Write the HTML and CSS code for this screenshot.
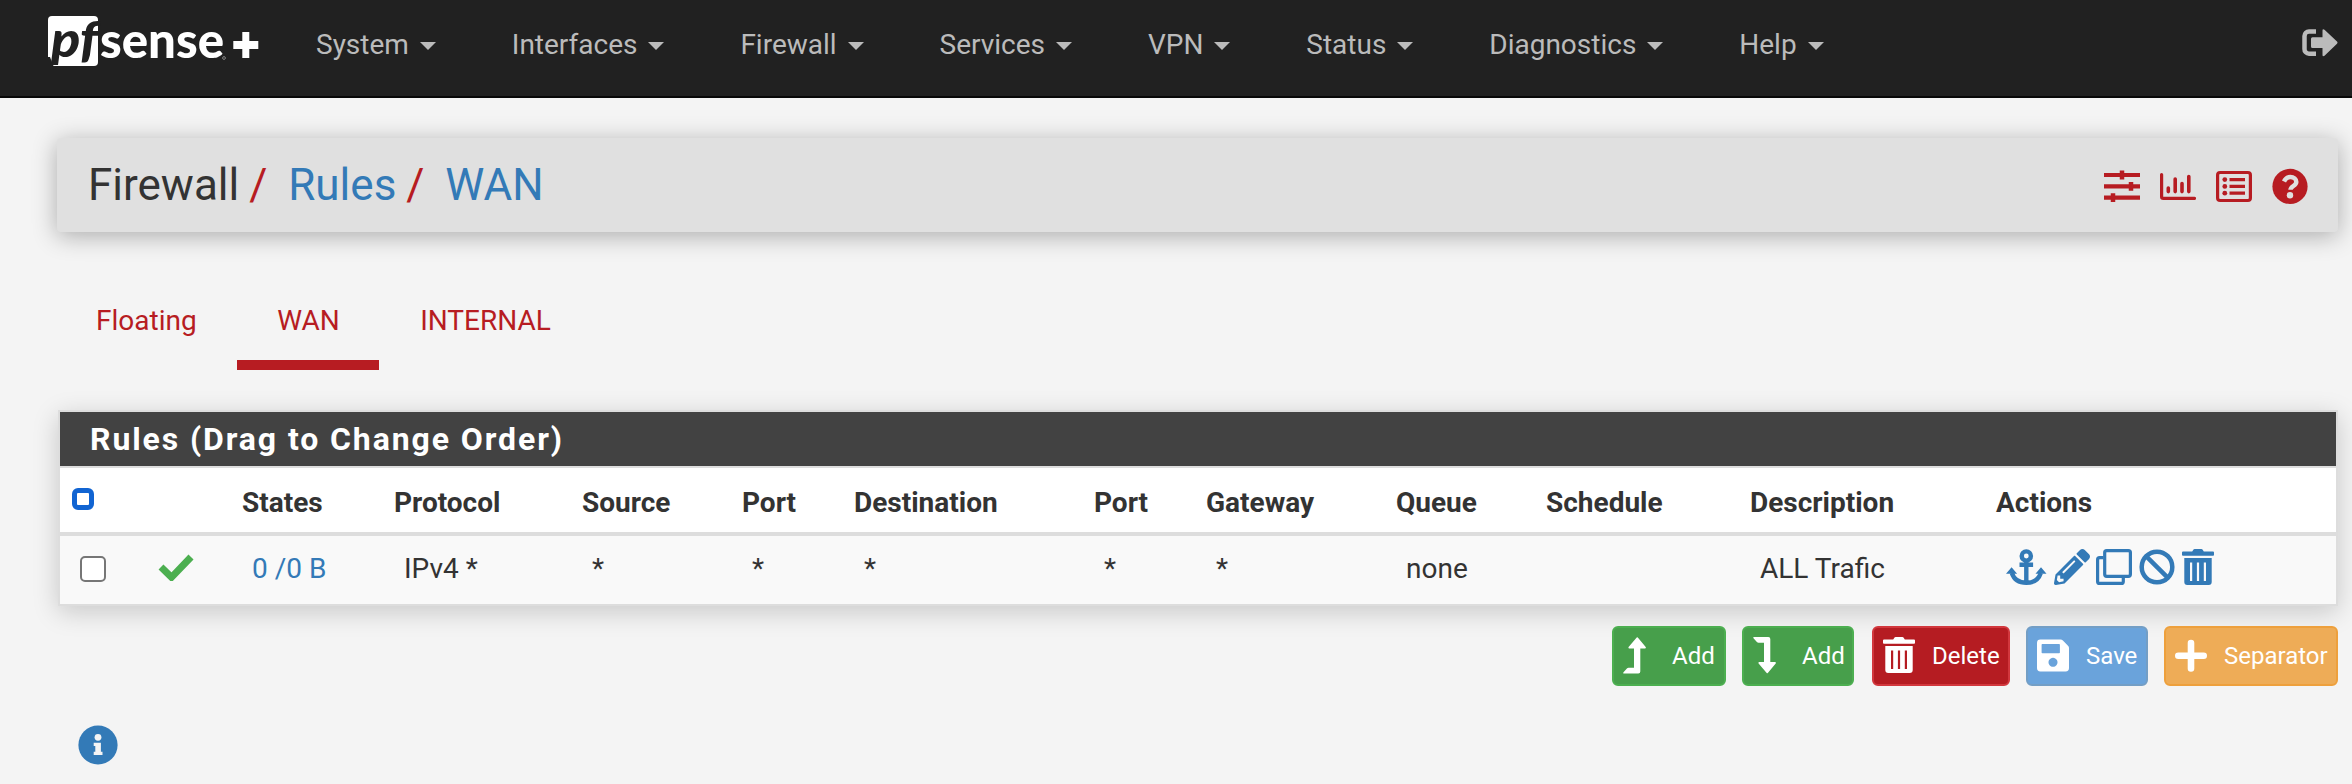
FILE: index.html
```html
<!DOCTYPE html>
<html lang="en">
<head>
<meta charset="utf-8">
<title>Firewall: Rules: WAN</title>
<link rel="stylesheet" href="styles.css">
</head>
<body>
<nav class="navbar">
  <svg class="logo" width="214" height="60" viewBox="0 0 214 60">
    <rect width="50" height="50" rx="4" fill="#fff"/>
    <path d="M0 41L2 41L5.500 50H0z" fill="#212121"/>
    <text class="logo-pf" x="3" y="41" textLength="47" lengthAdjust="spacingAndGlyphs">pf</text>
    <text class="logo-sense" x="52" y="41.5" textLength="124" lengthAdjust="spacingAndGlyphs">sense</text>
    <circle cx="176" cy="42" r="1.4" fill="none" stroke="#999" stroke-width=".8"/>
    <path d="M194.300 16h7v9h9v8h-9v9h-7v-9h-9v-8h9z" fill="#fff"/>
  </svg>
  <ul class="menu">
    <li>System<i class="caret"></i></li>
    <li>Interfaces<i class="caret"></i></li>
    <li>Firewall<i class="caret"></i></li>
    <li>Services<i class="caret"></i></li>
    <li>VPN<i class="caret"></i></li>
    <li>Status<i class="caret"></i></li>
    <li>Diagnostics<i class="caret"></i></li>
    <li>Help<i class="caret"></i></li>
  </ul>
  <svg class="logout" width="36" height="28" viewBox="0 0 36 28">
    <path d="M14 2.500H7A4.500 4.500 0 0 0 2.500 7v13A4.500 4.500 0 0 0 7 24.700h7" fill="none" stroke="#bbb" stroke-width="4.500"/>
    <path d="M10.500 8.200H20.500V1.500q0-2.200 2-.8L35 12.500q1 1.100 0 2.200L22.500 26.700q-2 1.200-2-.8V19H10.500q-1.500 0-1.500-1.500v-7.800q0-1.500 1.500-1.500z" fill="#bbb"/>
  </svg>
</nav>

<main class="container">
  <header class="page-header">
    <ol class="breadcrumb">
      <li>Firewall</li><li class="sep">/</li><li><a>Rules</a></li><li class="sep">/</li><li><a>WAN</a></li>
    </ol>
    <div class="header-icons">
      <svg width="36" height="36" viewBox="0 0 36 36" fill="none" stroke="#b71c22">
        <path d="M0 7h36M0 18.300h36M0 29.700h36" stroke-width="4.200"/>
        <path d="M18 2.600v8.800M27 13.900v8.800M9 25.300v8.800" stroke-width="4.500"/>
      </svg>
      <svg width="36" height="36" viewBox="0 0 36 36" fill="none" stroke="#b71c22" stroke-linecap="round">
        <path d="M1.600 6.500v22.200q0 1.700 1.700 1.700h31.200" stroke-width="3.200"/>
        <path d="M8.300 20v3.600M15.200 11v12.600M22 15.500v8.100M28.800 8.600v15" stroke-width="3.600"/>
      </svg>
      <svg width="36" height="36" viewBox="0 0 36 36" fill="none" stroke="#b71c22">
        <rect x="1.600" y="4.500" width="32.800" height="28" rx="2.500" stroke-width="3.200"/>
        <path d="M13.500 11.600h15.500M13.500 18.400h15.500M13.500 25.200h15.500" stroke-width="3.200"/>
        <g fill="#b71c22" stroke="none"><circle cx="8.800" cy="11.600" r="2.400"/><circle cx="8.800" cy="18.400" r="2.400"/><circle cx="8.800" cy="25.200" r="2.400"/></g>
      </svg>
      <svg width="36" height="36" viewBox="0 0 36 36">
        <circle cx="18" cy="18.400" r="17.600" fill="#b71c22"/>
        <path d="M12 13.600C13.500 10.500 15.400 9 18.300 9c3.500 0 6 2.200 6 5 0 3.900-5.800 4.100-5.800 7.800" fill="none" stroke="#e0e0e0" stroke-width="4.500"/>
        <circle cx="18" cy="27.300" r="3.200" fill="#e0e0e0"/>
      </svg>
    </div>
  </header>

  <ul class="tabs">
    <li>Floating</li><li class="active">WAN</li><li>INTERNAL</li>
  </ul>

  <section class="panel">
    <h2 class="panel-title">Rules (Drag to Change Order)</h2>
    <div class="row head">
      <span><i class="check-all"></i></span><span></span><span>States</span><span>Protocol</span><span>Source</span><span>Port</span><span>Destination</span><span>Port</span><span>Gateway</span><span>Queue</span><span>Schedule</span><span>Description</span><span>Actions</span>
    </div>
    <div class="row rule">
      <span><i class="check"></i></span>
      <span><svg class="pass" width="36" height="28" viewBox="0 0 36 28"><path d="M3 14l10.500 10.300L33 4" fill="none" stroke="#4caf50" stroke-width="7"/></svg></span>
      <span><a>0 /0 B</a></span><span>IPv4 *</span><span>*</span><span>*</span><span>*</span><span>*</span><span>*</span><span>none</span><span></span><span>ALL Trafic</span>
      <span class="actions">
        <svg width="41" height="37" viewBox="0 0 41 37" fill="none" stroke="#337ab7">
          <circle cx="20.300" cy="7" r="4.600" stroke-width="4.400"/>
          <path d="M20.300 12v23M13.500 15.700h13.600M5.800 24C8 30.500 13 33.800 20.300 33.800S32.600 30.500 34.800 24" stroke-width="4.400"/>
          <path d="M0 24.800l5.600-6.600 5.500 6.600zM29.500 24.800l5.500-6.600 5.500 6.600z" fill="#337ab7" stroke="none"/>
        </svg>
        <svg width="36" height="36" viewBox="0 0 512 512" fill="#337ab7"><path d="M497.900 142.100l-46.100 46.100c-4.700 4.700-12.300 4.700-17 0l-111-111c-4.700-4.700-4.700-12.300 0-17l46.100-46.100c18.700-18.700 49.100-18.700 67.900 0l60.100 60.100c18.800 18.700 18.800 49.100 0 67.900zM284.200 99.800L21.600 362.400.4 483.900c-2.900 16.400 11.400 30.600 27.800 27.800l121.500-21.300 262.600-262.600c4.700-4.700 4.700-12.300 0-17l-111-111c-4.800-4.700-12.400-4.700-17.100 0zM124.100 339.900c-5.500-5.500-5.500-14.300 0-19.800l154-154c5.500-5.500 14.300-5.500 19.800 0s5.500 14.300 0 19.800l-154 154c-5.500 5.500-14.300 5.500-19.800 0zM88 424h48v36.300l-64.500 11.300-31.100-31.100L51.700 376H88v48z"/></svg>
        <svg width="36" height="36" viewBox="0 0 36 36" fill="none" stroke="#337ab7" stroke-width="3.200">
          <rect x="8.700" y="1.600" width="25.700" height="25.700" rx="2"/>
          <path d="M7.500 8.700H3.600q-2 0-2 2v21.700q0 2 2 2h21.700q2 0 2-2v-5"/>
        </svg>
        <svg width="36" height="36" viewBox="0 0 36 36" fill="none" stroke="#337ab7" stroke-width="4.500">
          <circle cx="18" cy="18" r="15.300"/><path d="M7.300 7.300l21.400 21.400"/>
        </svg>
        <svg width="32" height="36" viewBox="0 0 32 36" fill="#337ab7">
          <path d="M1 2.600h9.200L11.500.4q.3-.4 1-.4h7q.7 0 1 .4l1.300 2.200H31q1 0 1 1v2.300q0 .8-1 .8H1q-1 0-1-.8V3.600q0-1 1-1z"/>
          <path fill-rule="evenodd" d="M2.300 9h27.400v24q0 3-3 3H5.300q-3 0-3-3zM8 13.500v18.500h2.200V13.500zM14.900 13.500v18.500h2.200V13.500zM21.800 13.500v18.500H24V13.500z"/>
        </svg>
      </span>
    </div>
  </section>

  <div class="buttons">
    <button class="btn add up"><svg width="36" height="38" viewBox="0 0 36 38" fill="#fff"><path d="M13.700.5Q14.200 0 14.800.5L22.700 10q.6 1.600-.7 1.600h-4.700V34.500q0 2-2 2H1q-1.300-.1-.5-1.300l3.400-3.700q.7-.7 1.600-.7H11V11.600H6.300q-1.300 0-.7-1.600z"/></svg>Add</button>
    <button class="btn add down"><svg width="36" height="38" viewBox="0 0 36 38" fill="#fff"><path d="M13.700 36Q14.200 36.500 14.800 36L22.700 26.500q.6-1.600-.7-1.600h-4.700V2q0-2-2-2H1Q-.3.100.5 1.300L3.900 5q.7.700 1.600.7H11V24.900H6.300q-1.300 0-.7 1.600z"/></svg>Add</button>
    <button class="btn delete"><svg width="32" height="38" viewBox="0 0 32 38" fill="#fff">
          <path d="M1 2.600h9.200L11.500.4q.3-.4 1-.4h7q.7 0 1 .4l1.300 2.200H31q1 0 1 1v2.300q0 .8-1 .8H1q-1 0-1-.8V3.600q0-1 1-1z"/>
          <path fill-rule="evenodd" d="M2.300 9h27.400v24q0 3-3 3H5.300q-3 0-3-3zM8 13.500v18.500h2.200V13.500zM14.900 13.500v18.500h2.200V13.500zM21.800 13.500v18.500H24V13.500z"/>
        </svg>Delete</button>
    <button class="btn save"><svg width="32" height="38" viewBox="0 0 32 38" fill="#fff"><path fill-rule="evenodd" d="M3.400 2.500h20.200q1.300 0 2.300 1l5.100 5.200q1 1 1 2.300V31q0 3.400-3.400 3.400H3.400Q0 34.400 0 31V5.900Q0 2.500 3.400 2.500zM5.400 7q-.8 0-.8.800v7.600q0 .8.800.8h16.700q.8 0 .8-.8V7.800q0-.8-.8-.8zM16 20.800a4.500 4.500 0 1 0 .01 0z"/></svg>Save</button>
    <button class="btn separator"><svg width="32" height="38" viewBox="0 0 32 38" fill="none" stroke="#fff" stroke-width="6.600" stroke-linecap="round"><path d="M3.300 18.700h25.400M16 6v25.400"/></svg>Separator</button>
  </div>

  <svg class="info" width="40" height="40" viewBox="0 0 40 40">
    <circle cx="20" cy="20" r="19.600" fill="#337ab7"/>
    <circle cx="20" cy="12.300" r="3.400" fill="#f4f4f4"/>
    <path d="M15.700 17.700h7.200v9h1.600V30h-8.800v-3.300h1.600V21h-1.600z" fill="#f4f4f4"/>
  </svg>
</main>
</body>
</html>
```

FILE: styles.css
```css
* { box-sizing: border-box; }
body {
  margin: 0;
  background: #f4f4f4;
  color: #333;
  font: 28px/40px Roboto, sans-serif;
}
ul, ol { list-style: none; margin: 0; padding: 0; }
a { color: #337ab7; }
svg { display: block; flex: none; }

.navbar {
  display: flex;
  height: 98px;
  padding-left: 48px;
  padding-right: 14px;
  background: #212121;
  border-bottom: 2px solid #080808;
}
.logo { margin-top: 16px; overflow: visible; }
.logo-pf { font: italic 900 49px Lato, sans-serif; fill: #212121; }
.logo-sense { font: 900 49px Lato, sans-serif; fill: #fff; }
.menu {
  display: flex;
  gap: 75.9px;
  margin-left: 54px;
  padding-top: 25px;
  color: #bbb;
}
.menu li { display: flex; align-items: center; height: 40px; }
.caret {
  margin: 2px 0 0 11px;
  border: 8px solid transparent;
  border-top-color: #bbb;
  border-bottom: 0;
}
.logout { margin: 29px 0 0 auto; }

.container { padding: 40px 14px 0 57px; }
.page-header {
  display: flex;
  justify-content: space-between;
  height: 94px;
  padding: 0 30px 0 31px;
  background: #e0e0e0;
  border-radius: 4px;
  box-shadow: 0 4px 24px rgba(0, 0, 0, .3);
}
.breadcrumb {
  display: flex;
  font-size: 44px;
  line-height: 50px;
  padding-top: 22px;
}
.sep { color: #b71c22; width: 39px; margin-left: 10px; }
.header-icons { display: flex; gap: 20px; padding-top: 30px; }

.tabs { display: flex; padding-top: 69px; margin-left: -1px; gap: 1px; color: #b71c22; }
.tabs li { height: 69px; padding: 0 39.5px 0 40px; line-height: 40px; }
.tabs .active { border-bottom: 10px solid #b71c22; }

.panel {
  margin: 40px 0 0 1px;
  border: 2px solid #ddd;
  background: #fff;
  box-shadow: 0 6px 24px rgba(0, 0, 0, .18);
}
.panel-title {
  margin: 0;
  height: 56px;
  padding-left: 30px;
  border-bottom: 2px solid #ddd;
  background: #424242;
  color: #fff;
  font-size: 32px;
  font-weight: 700;
  line-height: 54px;
  letter-spacing: 1.9px;
}
.row {
  display: grid;
  grid-template-columns: 99px 83px 152px 188px 160px 112px 240px 112px 190px 150px 204px 246px 1fr;
}
.head { height: 68px; border-bottom: 4px solid #ddd; padding-top: 15px; font-weight: 700; }
.rule { height: 68px; padding-top: 13px; background: #f9f9f9; }
.rule span { padding-left: 10px; }
.check-all {
  display: block;
  width: 22px;
  height: 22px;
  margin: 5px 0 0 12px;
  border: 5px solid #1164d2;
  border-radius: 6px;
}
.check {
  display: block;
  width: 26px;
  height: 26px;
  margin: 7px 0 0 10px;
  border: 2px solid #767676;
  border-radius: 5px;
  background: #fff;
}
.rule .pass { margin: 4px 0 0 -11px; }
.rule .actions { display: flex; gap: 6.7px; padding-left: 10px; }

.buttons { display: flex; padding: 20px 0 0 1555px; }
.btn {
  display: flex;
  align-items: center;
  height: 60px;
  padding: 0 0 0 9px;
  border: 2px solid;
  border-radius: 6px;
  color: #fff;
  font: 24px Roboto, sans-serif;
}
.btn svg { margin-right: 13px; }
.add { background: #479f4b; border-color: #4caf50; }
.up { width: 114px; margin-right: 16px; }
.down { width: 112px; margin-right: 18px; }
.delete { width: 138px; margin-right: 16px; background: #b51c22; border-color: #d2373d; }
.save { width: 122px; margin-right: 16px; background: #6aa3db; border-color: #739ec5; }
.separator { width: 174px; background: #eeac57; border-color: #eea03c; }
.delete svg, .save svg, .separator svg { margin-right: 17px; }

.info { margin: 39px 0 0 21px; }
```
